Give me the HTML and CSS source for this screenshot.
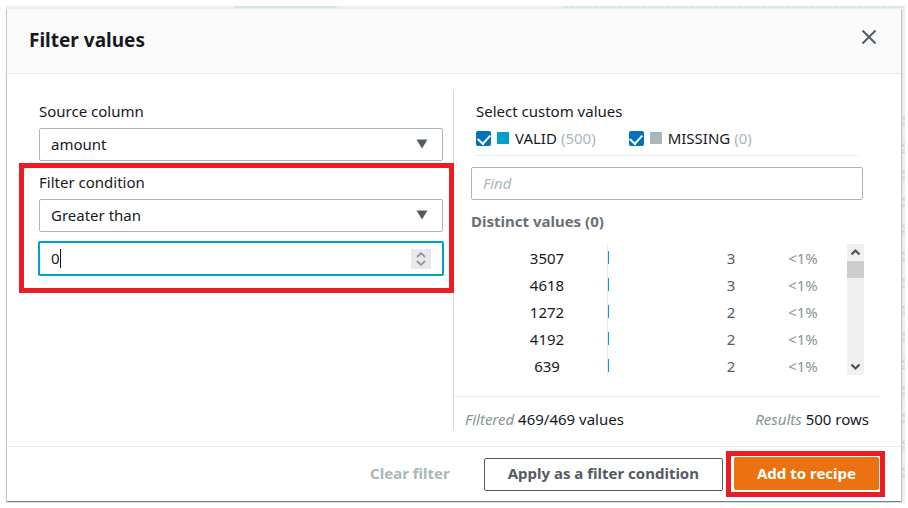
FILE: index.html
```html
<!DOCTYPE html>
<html lang="en">
<head>
    <meta charset="UTF-8">
    <meta name="viewport" content="width=device-width, initial-scale=1.0">
    <title>Filter values</title>
    <link rel="stylesheet" href="styles.css">
</head>
<body>

    <div class="page">
        <!-- Dimmed grid behind the dialog -->
        <div class="backdrop" aria-hidden="true">
            <div class="backdrop-bars">
                <span class="bar-gap"></span>
                <span class="bar-solid"></span>
                <span class="bar-gap"></span>
                <span class="bar-dashed"></span>
            </div>
            <div class="backdrop-cells">
                <span>s</span><span>s</span><span>s</span><span>s</span><span>s</span><span>s</span><span>s</span>
                <span>s</span><span>s</span><span>s</span><span>s</span><span>s</span><span>s</span><span>s</span>
            </div>
        </div>

        <div class="modal" role="dialog" aria-labelledby="modal-title">
            <!-- Header -->
            <div class="modal-header">
                <h1 id="modal-title">Filter values</h1>
                <button class="close" type="button" aria-label="Close">
                    <svg width="16" height="16" viewBox="0 0 16 16"><path d="M1.5 1.5l13 13M14.5 1.5l-13 13" fill="none" stroke="#545b64" stroke-width="2"/></svg>
                </button>
            </div>

            <!-- Body -->
            <div class="modal-body">
                <div class="condition-panel">
                    <div class="source">
                        <label for="source-column">Source column</label>
                        <div class="select-wrap">
                            <select id="source-column"><option>amount</option></select>
                            <svg class="arrow" width="12" height="10" viewBox="0 0 12 10"><path d="M0.5 0.5h11L6 9.5z" fill="#545b64"/></svg>
                        </div>
                    </div>

                    <div class="condition highlight">
                        <label for="filter-condition">Filter condition</label>
                        <div class="select-wrap">
                            <select id="filter-condition"><option>Greater than</option></select>
                            <svg class="arrow" width="12" height="10" viewBox="0 0 12 10"><path d="M0.5 0.5h11L6 9.5z" fill="#545b64"/></svg>
                        </div>
                        <div class="number-field">
                            <input type="number" value="0" aria-label="Condition value">
                            <span class="caret"></span>
                            <svg class="spinner" width="20" height="20" viewBox="0 0 20 20"><path d="M6 8l4-4 4 4M6 12l4 4 4-4" fill="none" stroke="#9696a0" stroke-width="1.8"/></svg>
                        </div>
                    </div>
                </div>

                <div class="values-panel">
                    <div class="custom-values">
                        <div class="label">Select custom values</div>
                        <div class="checks">
                            <label><input type="checkbox" checked><span class="swatch valid"></span>VALID <span class="muted">(500)</span></label>
                            <label><input type="checkbox" checked><span class="swatch missing"></span>MISSING <span class="muted">(0)</span></label>
                        </div>
                    </div>

                    <input class="find" type="text" placeholder="Find" aria-label="Find">
                    <h2>Distinct values (0)</h2>

                    <div class="values-list">
                        <table>
                            <tr><td class="value">3507</td><td class="graph"><span></span></td><td class="count">3</td><td class="percent">&lt;1%</td></tr>
                            <tr><td class="value">4618</td><td class="graph"><span></span></td><td class="count">3</td><td class="percent">&lt;1%</td></tr>
                            <tr><td class="value">1272</td><td class="graph"><span></span></td><td class="count">2</td><td class="percent">&lt;1%</td></tr>
                            <tr><td class="value">4192</td><td class="graph"><span></span></td><td class="count">2</td><td class="percent">&lt;1%</td></tr>
                            <tr><td class="value">639</td><td class="graph"><span></span></td><td class="count">2</td><td class="percent">&lt;1%</td></tr>
                        </table>
                        <div class="scrollbar">
                            <svg width="17" height="17" viewBox="0 0 17 17"><path d="M4.5 10.5l4-4 4 4" fill="none" stroke="#505050" stroke-width="2.2"/></svg>
                            <div class="thumb"></div>
                            <svg class="down" width="17" height="17" viewBox="0 0 17 17"><path d="M4.5 6.5l4 4 4-4" fill="none" stroke="#505050" stroke-width="2.2"/></svg>
                        </div>
                    </div>

                    <div class="summary">
                        <span><em>Filtered</em> 469/469 values</span>
                        <span><em>Results</em> 500 rows</span>
                    </div>
                </div>
            </div>

            <!-- Footer -->
            <div class="modal-footer">
                <button class="btn btn-link" type="button" disabled>Clear filter</button>
                <button class="btn btn-normal" type="button">Apply as a filter condition</button>
                <div class="highlight primary-wrap">
                    <button class="btn btn-primary" type="button">Add to recipe</button>
                </div>
            </div>
        </div>
    </div>

</body>
</html>
```
FILE: styles.css
```css
* {
    box-sizing: border-box;
}

body {
    margin: 0;
    padding: 6px 3px 5px 6px;
    background-color: #fff;
    color: #16191f;
    font-family: "Noto Sans", "Open Sans", sans-serif;
    font-size: 15px;
    line-height: 20px;
}

input,
select,
button {
    font: inherit;
    color: inherit;
}

/* Backdrop and dialog share one grid cell */
.page {
    display: grid;
}

.backdrop,
.modal {
    grid-area: 1 / 1;
}

.backdrop {
    height: 0;
    min-height: 100%;
    background-color: #eceff0;
    overflow: hidden;
}

.backdrop-bars {
    display: grid;
    grid-template-columns: 228fr 103fr 225fr 342fr;
    height: 2px;
}

.bar-solid {
    background-color: #d3e7eb;
}

.bar-dashed {
    background: repeating-linear-gradient(90deg, #d3e7eb 0 5px, #eceff0 5px 6px);
}

.backdrop-cells {
    display: flex;
    flex-direction: column;
    align-items: flex-end;
    margin-right: -4px;
    padding-top: 100px;
    color: #ccd2d5;
}

.backdrop-cells span {
    height: 27px;
    text-decoration: underline;
}

/* Dialog */
.modal {
    margin: 3px 4px 2px 1px;
    background-color: #fff;
    box-shadow: 0 1px 1px 0 rgba(0, 28, 36, 0.3), 1px 1px 1px 0 rgba(0, 28, 36, 0.15), -1px 1px 1px 0 rgba(0, 28, 36, 0.15);
}

.modal-header {
    display: flex;
    justify-content: space-between;
    align-items: flex-start;
    height: 65px;
    padding: 18px 24px 0 22px;
    background-color: #fafafa;
    border-bottom: 1px solid #eaeded;
}

.modal-header h1 {
    margin: 0;
    font-size: 19px;
    line-height: 26px;
}

.close {
    display: flex;
    margin-top: 2px;
    padding: 0;
    border: 0;
    background: none;
}

/* Body */
.modal-body {
    display: grid;
    grid-template-columns: 1fr 1fr;
    padding: 16px 0;
}

.condition-panel {
    padding-top: 11px;
    border-right: 1px solid #d5dbdb;
}

.source {
    padding: 0 10px 0 32px;
}

.source label,
.condition label {
    display: block;
    margin-bottom: 7px;
}

.select-wrap {
    position: relative;
}

select {
    appearance: none;
    display: block;
    width: 100%;
    height: 33px;
    padding: 0 11px 2px;
    border: 1px solid #aab7b8;
    border-radius: 2px;
    background-color: #fff;
}

.arrow {
    position: absolute;
    right: 15px;
    top: 11px;
}

.highlight {
    border: 5px solid #ed1c24;
}

.condition {
    margin: 2px -1px 0 12px;
    padding: 4px 6px 12px 15px;
}

.number-field {
    position: relative;
    display: flex;
    align-items: center;
    height: 35px;
    margin: 9px -1px 0;
    padding: 0 11px;
    border: 2px solid #00a1c9;
    border-radius: 2px;
}

.number-field input {
    appearance: textfield;
    flex: 1;
    min-width: 0;
    padding: 0 0 2px;
    border: 0;
    outline: 0;
}

.number-field input::-webkit-inner-spin-button {
    appearance: none;
}

.caret {
    position: absolute;
    left: 20px;
    width: 1px;
    height: 19px;
    background-color: #16191f;
}

.spinner {
    background-color: #e9e9ed;
}

/* Values */
.values-panel {
    padding-top: 11px;
}

.custom-values {
    margin: 0 43px 0 22px;
    border-bottom: 1px solid #eaeded;
}

.checks {
    display: flex;
    gap: 33px;
    padding: 7px 0;
}

.checks label {
    display: flex;
    align-items: center;
}

.checks input {
    appearance: none;
    display: flex;
    justify-content: center;
    width: 15px;
    height: 15px;
    margin: 0 6px 0 0;
    border-radius: 2px;
    background-color: #0073bb;
}

.checks input::after {
    content: "";
    width: 6px;
    height: 10px;
    margin-top: 1px;
    border: solid #fff;
    border-width: 0 2px 2px 0;
    transform: rotate(42deg);
}

.swatch {
    width: 12px;
    height: 12px;
    margin-right: 6px;
}

.valid {
    background-color: #00a1c9;
}

.missing {
    background-color: #aab7b8;
}

.muted {
    margin-left: 4px;
    color: #aab7b8;
}

.find {
    display: block;
    width: calc(100% - 55px);
    height: 33px;
    margin: 11px 0 0 17px;
    padding: 0 11px 2px;
    border: 1px solid #aab7b8;
    border-radius: 2px;
}

.find::placeholder {
    color: #aab7b8;
    font-style: italic;
}

.values-panel h2 {
    margin: 11px 17px 13px;
    color: #687078;
    font-size: 15px;
    line-height: 20px;
}

.values-list {
    display: flex;
    height: 131px;
    margin: 0 37px 0 17px;
    overflow: hidden;
}

.values-list table {
    flex: 1;
    table-layout: fixed;
    border-spacing: 0;
}

.values-list td {
    height: 27px;
    padding: 0;
    text-align: center;
}

.values-list .value {
    width: 136px;
    padding-left: 16px;
}

.values-list .graph {
    width: 100px;
    border-left: 1px solid #eaeded;
}

.graph span {
    display: block;
    width: 1px;
    height: 13px;
    background-color: #00a1c9;
}

.values-list .count {
    width: 48px;
    color: #545b64;
}

.values-list .percent {
    padding-left: 4px;
    color: #879596;
}

.scrollbar {
    display: flex;
    flex-direction: column;
    width: 17px;
    background-color: #f0f0f0;
}

.thumb {
    height: 17px;
    background-color: #cdcdcd;
}

.down {
    margin-top: auto;
}

.summary {
    display: flex;
    justify-content: space-between;
    margin: 21px 22px 0 0;
    padding: 12px 10px 1px 11px;
    border-top: 1px solid #eaeded;
}

.summary em {
    color: #879596;
}

/* Footer */
.modal-footer {
    display: flex;
    justify-content: flex-end;
    align-items: center;
    padding: 4px 16px;
    border-top: 1px solid #eaeded;
}

.btn {
    height: 33px;
    padding: 0 21px 2px;
    border: 1px solid transparent;
    border-radius: 2px;
    background: none;
    font-weight: bold;
}

.btn-link {
    margin-right: 12px;
    color: #aab7b8;
}

.btn-normal {
    margin-right: 3px;
    padding: 0 23px 2px;
    border-color: #545b64;
    color: #545b64;
}

.primary-wrap {
    padding: 1px 1px 2px 3px;
}

.btn-primary {
    display: block;
    min-width: 145px;
    background-color: #ec7211;
    color: #fff;
}
```
